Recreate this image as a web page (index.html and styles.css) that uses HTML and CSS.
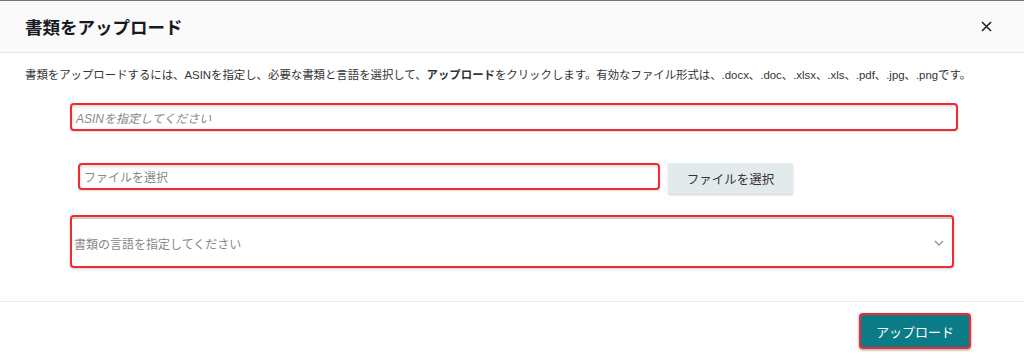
FILE: index.html
```html
<!DOCTYPE html>
<html lang="ja">
  <head>
    <meta charset="UTF-8" />
    <meta name="viewport" content="width=device-width, initial-scale=1.0" />
    <title>書類をアップロード</title>
    <link rel="stylesheet" href="styles.css">
  </head>
  <body>
    <div class="modal">
      <div class="modal-header">
        <h1 class="modal-title">書類をアップロード</h1>
        <svg class="close" width="11" height="11" viewBox="0 0 11 11">
          <path d="M1 1 L10 10 M10 1 L1 10" stroke="#222" stroke-width="1.6" />
        </svg>
      </div>

      <div class="modal-body">
        <p class="intro">
          書類をアップロードするには、ASINを指定し、必要な書類と言語を選択して、<b>アップロード</b>をクリックします。有効なファイル形式は、.docx、.doc、.xlsx、.xls、.pdf、.jpg、.pngです。
        </p>

        <div class="field asin">
          <span class="placeholder italic">ASINを指定してください</span>
        </div>

        <div class="file-row">
          <div class="field file">
            <span class="placeholder">ファイルを選択</span>
          </div>
          <button class="file-button">ファイルを選択</button>
        </div>

        <div class="field select">
          <span class="placeholder">書類の言語を指定してください</span>
          <svg class="chevron" width="10" height="6" viewBox="0 0 10 6">
            <path d="M1 1 L5 5 L9 1" fill="none" stroke="#8b9aa3" stroke-width="1.4" />
          </svg>
        </div>
      </div>

      <div class="modal-footer">
        <button class="upload">アップロード</button>
      </div>
    </div>
  </body>
</html>
```

FILE: styles.css
```css
body {
  margin: 0;
  padding: 0;
  background-color: white;
  font-family: "Liberation Sans", "Noto Sans CJK JP", sans-serif;
  color: #333;
}

.modal {
  border-top: 1px solid #777;
  height: 358px;
  display: flex;
  flex-direction: column;
}

.modal-header {
  height: 51px;
  background-color: #fafafa;
  border-bottom: 1px solid #e3e6e6;
  display: flex;
  align-items: center;
  justify-content: space-between;
  padding: 0 32px 0 25px;
}

.modal-title {
  margin: 0;
  font-size: 17.5px;
  font-weight: bold;
  color: #16191f;
}

.close {
  margin-top: -1px;
}

.modal-body {
  padding: 0 25px;
  height: 248px;
  border-bottom: 1px solid #eaeded;
}

.intro {
  margin: 14px 0 0;
  font-size: 11.4px;
  line-height: 16px;
  color: #333;
  white-space: nowrap;
}

.field {
  box-sizing: border-box;
  border: 2px solid #ee2b33;
  border-radius: 4px;
  box-shadow: inset 1px 2px 3px rgba(0, 0, 0, 0.12), 0 1px 2px rgba(0, 0, 0, 0.15);
  display: flex;
  align-items: center;
  background: white;
}

.placeholder {
  font-size: 12px;
  color: #888;
  padding-left: 4px;
}

.italic {
  font-style: italic;
}

.asin {
  margin: 20px 0 0 45px;
  width: 888px;
  height: 28px;
}

.file-row {
  display: flex;
  align-items: center;
  gap: 8px;
  margin: 27px 0 0 53px;
}

.file {
  width: 582px;
  height: 27px;
}

.file-button {
  width: 125px;
  height: 31px;
  margin-top: 5px;
  border: none;
  border-radius: 2px;
  background-color: #e3eaeb;
  box-shadow: 0 1px 2px rgba(0, 0, 0, 0.2);
  font-family: "Liberation Sans", "Noto Sans CJK JP", sans-serif;
  font-size: 12.5px;
  color: #333;
}

.select {
  margin: 21px 0 0 45px;
  width: 884px;
  height: 53px;
  justify-content: space-between;
  padding-right: 8px;
  box-shadow: inset 0 2px 0 #c9cfcf, 0 1px 3px rgba(0, 0, 0, 0.2);
}

.select .placeholder {
  padding-left: 2px;
  margin-top: 3px;
}

.chevron {
  margin-top: 3px;
}

.modal-footer {
  display: flex;
  justify-content: flex-end;
  padding: 11px 53px 0 0;
}

.upload {
  width: 112px;
  height: 36px;
  border: 2px solid #ee2b33;
  border-radius: 4px;
  background-color: #0b7b88;
  box-shadow: 0 1px 3px rgba(0, 0, 0, 0.4);
  color: white;
  font-family: "Liberation Sans", "Noto Sans CJK JP", sans-serif;
  font-size: 13px;
}
```
